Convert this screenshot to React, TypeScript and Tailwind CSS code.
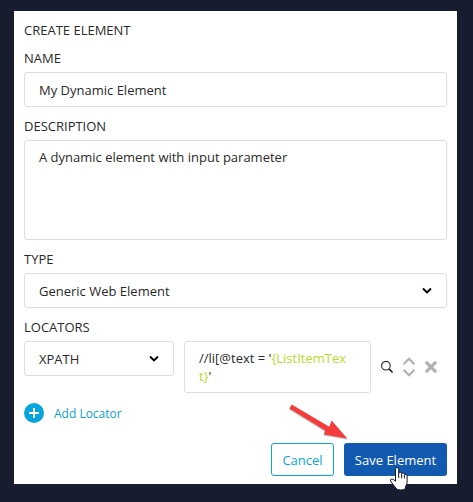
import type { ReactNode } from 'react';

const box = 'rounded-[3px] border border-[#dedede] bg-white';

function Label({ children }: { children: ReactNode }) {
  return <div className="h-[19px] leading-[19px]">{children}</div>;
}

function Chevron() {
  return (
    <svg width="10" height="8" viewBox="0 0 10 8" fill="none" stroke="#000" strokeWidth="1.9">
      <path d="M1 1.5 5 5.4 9 1.5" />
    </svg>
  );
}

function Select({ value, className }: { value: string; className: string }) {
  return (
    <div className={`${box} flex h-[35px] items-center justify-between pl-[14px] pr-[14px] ${className}`}>
      <span className="relative top-px">{value}</span>
      <Chevron />
    </div>
  );
}

export default function App() {
  return (
    <div className="relative h-[502px] w-[473px] overflow-hidden bg-[#171c2f] pl-[14px] pt-[11px] font-['Open_Sans',sans-serif] text-[13px] text-[#2a2a2a]">
      <div className="h-[473px] w-[443px] bg-white px-[10px] pt-[10px]">
        <Label>CREATE ELEMENT</Label>
        <div className="mt-[9px] flex flex-col gap-[10px]">
          <div className="flex flex-col gap-1">
            <Label>NAME</Label>
            <div className={`${box} flex h-[35px] items-center px-[14px]`}>
              <span className="relative top-px">My Dynamic Element</span>
            </div>
          </div>
          <div className="flex flex-col gap-1">
            <Label>DESCRIPTION</Label>
            <div className={`${box} h-[100px] px-[14px] pt-[7px] leading-[18px]`}>
              A dynamic element with input parameter
            </div>
          </div>
          <div className="flex flex-col gap-1">
            <Label>TYPE</Label>
            <Select value="Generic Web Element" className="w-full" />
          </div>
          <div className="flex flex-col gap-1">
            <Label>LOCATORS</Label>
            <div className="flex items-start">
              <Select value="XPATH" className="w-[150px]" />
              <div className={`${box} ml-[10px] h-[52px] w-[187px] pl-[14px] pt-[7px] leading-[18px]`}>
                //li[@text = '<span className="font-medium text-[#b5dc2c]">{'{ListItemTex'}</span>
                <br />
                <span className="font-medium text-[#b5dc2c]">{'t}'}</span>'
              </div>
              <div className="flex h-[52px] items-center pl-[10px]">
                <svg width="12" height="12" viewBox="0 0 12 12" fill="none" stroke="#222" strokeWidth="1.1">
                  <circle cx="4.9" cy="4.7" r="4.3" />
                  <path d="m8 7.9 3.6 3.5" strokeWidth="1.6" />
                </svg>
                <svg className="ml-[10px]" width="12" height="20" viewBox="0 0 12 20" fill="none" stroke="#b2b2b2" strokeWidth="2.2">
                  <path d="m.6 7.2 5.4-5.4 5.4 5.4M.6 12.8 6 18.2l5.4-5.4" />
                </svg>
                <svg className="ml-[10px]" width="12" height="12" viewBox="0 0 12 12" fill="none" stroke="#b2b2b2" strokeWidth="3.4" strokeLinecap="round">
                  <path d="m1.9 1.9 8.2 8.2m0-8.2-8.2 8.2" />
                </svg>
              </div>
            </div>
          </div>
          <div className="flex h-5 items-center gap-[10px] text-[12px] text-[#0d9fd0]">
            <svg width="20" height="20" viewBox="0 0 20 20">
              <circle cx="10" cy="10" r="10" fill="#06a5dc" />
              <path d="M10 5v10M5 10h10" stroke="#fff" strokeWidth="2" />
            </svg>
            <span className="relative top-px">Add Locator</span>
          </div>
        </div>
        <div className="mt-5 flex justify-end gap-[10px]">
          <button className="h-[33px] w-[63px] rounded-[3px] border border-[#06a5dc] text-[#06a5dc]">
            <span className="relative top-px">Cancel</span>
          </button>
          <button className="h-[33px] w-[103px] rounded-[3px] bg-[#1259b0] text-white">
            <span className="relative top-px">Save Element</span>
          </button>
        </div>
      </div>
      <svg className="absolute left-[285px] top-[400px]" width="65" height="44" viewBox="285 400 65 44">
        <path d="M291.3 406.2 289.2 409.8 324.6 431.6 323.8 435.6 347.5 439.8 332 421.4 329.6 428Z" fill="#777" opacity=".45" />
        <path d="M291.7 404.6 289.4 408.4 325.2 430.4 324 434.6 347.3 438.6 331.6 420.6 329.3 426.8Z" fill="#f33c3b" />
      </svg>
      <svg className="absolute left-[389px] top-[466px]" width="20" height="25" viewBox="0 0 20 25">
        <path
          d="M6.5 2.6Q8 .2 9.7 2.6V6.6q1.7-1 2.9.6 1.7-.8 2.7.8 2.1-.3 2.8 1.8v6.4q0 2.2-1.6 4.2v2Q15 24 11.5 24 8 24 7 22.2L2 15.8q-1.2-2 .2-2.8 1.6-.6 4.3 2.2Z"
          fill="#fff"
          stroke="#14182b"
          strokeWidth="1"
          strokeLinejoin="round"
        />
        <path d="M9.7 6.5v5.6M12.6 7.5v4.8M15.4 8.5v4" fill="none" stroke="#14182b" strokeWidth="1" />
      </svg>
    </div>
  );
}
